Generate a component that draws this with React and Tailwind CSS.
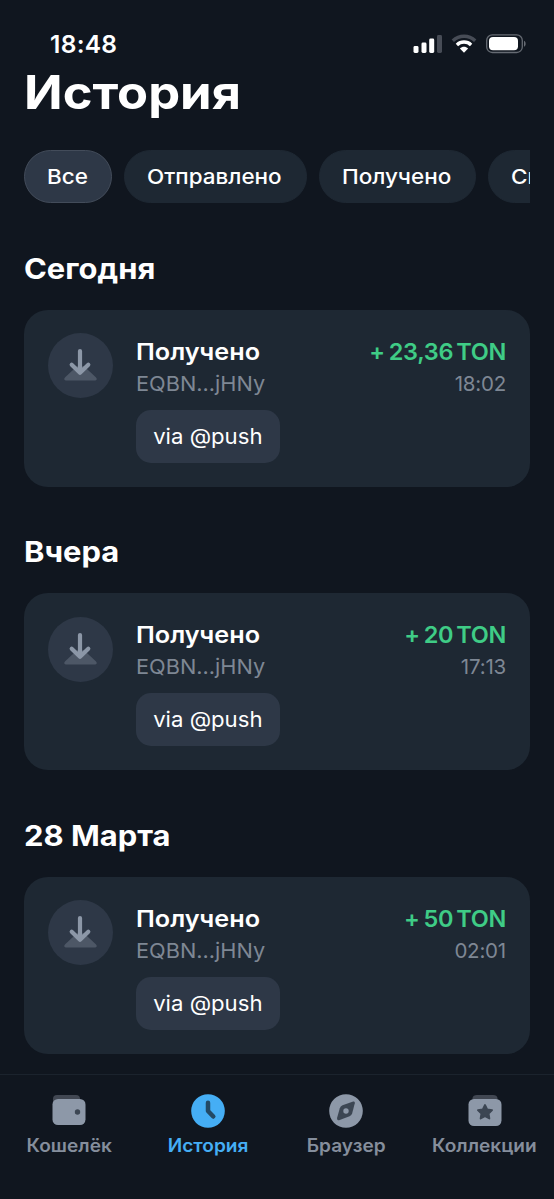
import React, { useState } from 'react';

const filters = [
  { id: 'all', label: 'Все', width: 'w-[88px]' },
  { id: 'sent', label: 'Отправлено', width: 'w-[183px]' },
  { id: 'received', label: 'Получено', width: 'w-[156.5px]' },
  { id: 'spam', label: 'Спам', width: 'w-[110px]' },
];

const groups = [
  { day: 'Сегодня', amount: '23,36', time: '18:02' },
  { day: 'Вчера', amount: '20', time: '17:13' },
  { day: '28 Марта', amount: '50', time: '02:01' },
];

// Status bar
const StatusBar = () => (
  <div className="flex h-[68px] shrink-0 items-center justify-between pt-5 pr-[27px] pl-[50px]">
    <span className="text-[24.5px] leading-none font-semibold tracking-[0.3px] text-white">18:48</span>
    <svg width="114" height="22" viewBox="0 0 114 22" fill="none">
      <rect x="0.5" y="13" width="5" height="7" rx="1.4" fill="#fff" />
      <rect x="8.5" y="9.5" width="5" height="10.5" rx="1.4" fill="#fff" />
      <rect x="16.2" y="5.5" width="5" height="14.5" rx="1.4" fill="#fff" />
      <rect x="24" y="2" width="5" height="18" rx="1.4" fill="#474c56" />
      <path d="M39.8 7.8C46.4 1.8 55.8 1.8 62.2 7.8" stroke="#474c56" strokeWidth="3.4" />
      <path d="M43.9 11.9C48 8.1 54 8.1 58.1 11.9" stroke="#fff" strokeWidth="3.4" />
      <path d="M46.9 15.5C49.3 13.3 52.7 13.3 55.1 15.5L51 19.8Z" fill="#fff" />
      <rect x="73.7" y="1.9" width="35.6" height="17.6" rx="5.6" stroke="#666b73" strokeWidth="1.3" />
      <rect x="76" y="4.1" width="29" height="13.2" rx="4" fill="#fff" />
      <path d="M111 7.7C113.2 8.7 113.2 12.7 111 13.7Z" fill="#666b73" />
    </svg>
  </div>
);

const ReceivedIcon = () => (
  <div className="-ml-[0.5px] flex h-[65px] w-[65px] shrink-0 items-center justify-center rounded-full bg-[#2e3847]">
    <svg width="65" height="65" viewBox="0 0 65 65" fill="none">
      <path d="M17.2 44.2L29 33.2H36L47.8 44.2C49.6 45.9 48.6 47.6 46.6 47.6H18.4C16.4 47.6 15.4 45.9 17.2 44.2Z" fill="#4d5766" />
      <path d="M32 18V39.5M23.7 31.8L32 39.8L40.3 31.8" stroke="#8c97a7" strokeWidth="4.2" strokeLinecap="round" strokeLinejoin="round" />
    </svg>
  </div>
);

// Transaction card
const TransactionCard = ({ amount, time }) => (
  <div className="flex h-[177px] rounded-[24px] bg-[#1e2833] px-6 pt-[23.5px]">
    <ReceivedIcon />
    <div className="ml-[23.5px] flex flex-1 flex-col items-start">
      <div className="flex h-[38.5px] w-full items-center justify-between pb-[1.5px] text-[23.5px] leading-none font-semibold">
        <span className="origin-left scale-x-[1.073] text-white">Получено</span>
        <span className="flex tracking-[-0.3px] text-[#3fcc86]">
          <span className="mr-1">+</span>
          <span className="mr-[3px]">{amount}</span>
          <span>TON</span>
        </span>
      </div>
      <div className="flex h-[25px] w-full items-center justify-between text-[20.5px] leading-none text-[#7e8794]">
        <span className="origin-left scale-x-[1.06]">EQBN...jHNy</span>
        <span className="tracking-[-0.2px]">{time}</span>
      </div>
      <div className="mt-[13px] flex h-[53px] w-[144px] items-center justify-center rounded-[15px] bg-[#2e3847] text-[21px] leading-none whitespace-nowrap text-white">
        <span className="scale-x-[1.055]">via @push</span>
      </div>
    </div>
  </div>
);

const WalletIcon = () => (
  <svg width="34" height="34" viewBox="0 0 34 34">
    <path d="M1 9V5Q1 1 5 1H24Q28 1 28 5V9Z" fill="#414752" />
    <rect x="0.5" y="5" width="33" height="26" rx="5.5" fill="#8d98a8" />
    <circle cx="25.5" cy="18" r="2.7" fill="#3c4653" />
  </svg>
);

const ClockIcon = () => (
  <svg width="34" height="34" viewBox="0 0 34 34" fill="none">
    <circle cx="17" cy="17" r="16.8" fill="#45aef5" />
    <path d="M17 8.8V17L22.3 22.5" stroke="#234965" strokeWidth="4.5" strokeLinecap="round" strokeLinejoin="round" />
  </svg>
);

const CompassIcon = () => (
  <svg width="34" height="34" viewBox="0 0 34 34">
    <circle cx="17" cy="17" r="16.8" fill="#8d98a8" />
    <path d="M8.2 23.5L10.8 14.3Q11.4 12.2 13.5 11.3L24.2 7.5Q26.3 7 25.8 9.3L23.2 19.2Q22.6 21.3 20.6 22.3L10 26.2Q7.6 26.6 8.2 23.5Z" fill="#3c4653" />
    <circle cx="17" cy="17" r="2.7" fill="#8d98a8" />
  </svg>
);

const CollectionsIcon = () => (
  <svg width="34" height="34" viewBox="0 0 34 34">
    <path d="M4.5 7V4Q5 1 9 1H25Q29 1 29.5 4V7Z" fill="#414752" />
    <rect x="0.5" y="5" width="33" height="27" rx="5.5" fill="#8d98a8" />
    <path d="M17 11L19.2 15.5L24.1 16.2L20.6 19.6L21.4 24.5L17 22.2L12.6 24.5L13.4 19.6L9.9 16.2L14.8 15.5Z" fill="#3c4653" stroke="#3c4653" strokeWidth="1.8" strokeLinejoin="round" />
  </svg>
);

const tabs = [
  { id: 'wallet', label: 'Кошелёк', icon: WalletIcon },
  { id: 'history', label: 'История', icon: ClockIcon },
  { id: 'browser', label: 'Браузер', icon: CompassIcon },
  { id: 'collections', label: 'Коллекции', icon: CollectionsIcon },
];

const App = () => {
  const [filter, setFilter] = useState('all');
  const [tab, setTab] = useState('history');

  return (
    <div className="flex h-[1199px] w-[554px] flex-col overflow-hidden bg-[#10161f] font-['Inter',sans-serif]">
      <StatusBar />

      <h1 className="flex h-12 shrink-0 items-center pl-[23.5px] text-[46.5px] leading-none font-bold text-white">
        <span className="origin-left scale-x-[1.09]">История</span>
      </h1>

      {/* Filters */}
      <div className="mx-6 mt-[34px] flex h-[53px] shrink-0 gap-3 overflow-hidden">
        {filters.map((f) => (
          <button
            key={f.id}
            onClick={() => setFilter(f.id)}
            className={`shrink-0 rounded-full border pt-0.5 pl-[22px] text-left text-[20.5px] leading-none font-medium text-white ${f.width} ${
              filter === f.id ? 'border-[#434c5a] bg-[#2e3847]' : 'border-[#1e2833] bg-[#1e2833]'
            }`}
          >
            <span className="inline-block origin-left scale-x-[1.095]">{f.label}</span>
          </button>
        ))}
      </div>

      {/* History */}
      <main className="mx-6 flex-1">
        {groups.map((g) => (
          <section key={g.day}>
            <h2 className="-ml-[0.5px] flex h-[106.5px] items-center pt-[25.5px] text-[28.5px] leading-none font-bold text-white">
              <span className="origin-left scale-x-[1.085]">{g.day}</span>
            </h2>
            <TransactionCard amount={g.amount} time={g.time} />
          </section>
        ))}
      </main>

      {/* Tab bar */}
      <nav className="grid h-[125px] shrink-0 grid-cols-4 border-t border-[#1b232d] pt-[19px]">
        {tabs.map(({ id, label, icon: Icon }) => (
          <button
            key={id}
            onClick={() => setTab(id)}
            className={`flex flex-col items-center text-[18px] leading-none font-semibold ${
              tab === id ? 'text-[#45aef5]' : 'text-[#858e9c]'
            }`}
          >
            <Icon />
            <span className="mt-[9px] scale-x-[1.06]">{label}</span>
          </button>
        ))}
      </nav>
    </div>
  );
};

export default App;
